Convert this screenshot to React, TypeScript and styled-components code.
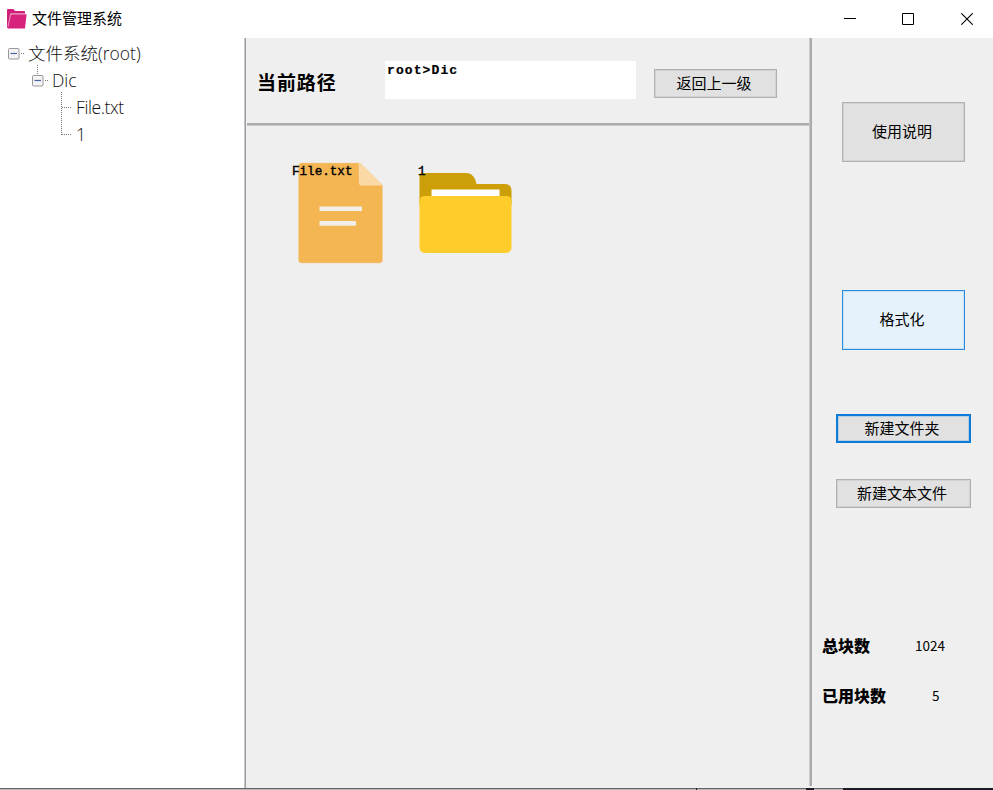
import React from "react";
import styled, { createGlobalStyle, css } from "styled-components";

const GlobalStyle = createGlobalStyle`
  * { box-sizing: border-box; }
  body { margin: 0; background: #fff; overflow: hidden; }
`;

const cjk = '"Liberation Sans", "Noto Sans CJK SC", sans-serif';

const Window = styled.div`
  display: flex;
  flex-direction: column;
  width: 993px;
  height: 790px;
  background: #fff;
  color: #000;
  font-family: ${cjk};
`;

const TitleBar = styled.header`
  display: flex;
  align-items: center;
  height: 38px;
  padding-left: 7px;
`;

const Title = styled.span`
  flex: 1;
  margin-left: 5px;
  font-size: 15px;
  line-height: 20px;
`;

const WindowControls = styled.div`
  display: flex;
  margin-right: -3px;
`;

const WindowControl = styled.span`
  display: flex;
  justify-content: center;
  width: 58.5px;
  svg { display: block; }
`;

const Body = styled.div`
  display: flex;
  height: 750px;
`;

const Tree = styled.nav`
  width: 246px;
  padding: 2px 0 0 4px;
  border-right: 1px solid #9a9fa7;
  box-shadow: inset -1px 0 #c4c6ca;
`;

const TreeRow = styled.div<{ $depth: number }>`
  display: flex;
  align-items: center;
  height: 27px;
  padding-left: ${(p) => p.$depth * 24}px;
`;

const TreeGutter = styled.svg`
  display: block;
  flex: none;
  overflow: visible;
`;

const TreeLabel = styled.span<{ $spacing?: number }>`
  font-family: "Open Sans", "Noto Sans CJK SC", sans-serif;
  font-size: 17.5px;
  font-weight: 300;
  line-height: 27px;
  color: #111;
  letter-spacing: ${(p) => p.$spacing ?? 0}px;
  white-space: nowrap;
`;

const Main = styled.main`
  display: flex;
  flex-direction: column;
  width: 563px;
  padding-left: 1px;
  background: #efefef;
`;

const PathBar = styled.div`
  display: flex;
  align-items: flex-start;
  height: 88px;
  border-bottom: 1px solid #cacaca;
  box-shadow: inset 0 -2px #ababab;
`;

const PathTitle = styled.h1`
  width: 128px;
  margin: 34px 0 0 10px;
  font-size: 19px;
  font-weight: 700;
  letter-spacing: 0.9px;
  line-height: 24px;
`;

const PathField = styled.div`
  width: 251px;
  height: 38px;
  margin-top: 23px;
  padding: 3px 2px;
  background: #fff;
  font: 700 13px/14px "Liberation Mono", monospace;
  letter-spacing: 1.1px;
  -webkit-text-stroke: 0.2px #000;
`;

type Tone = "plain" | "hover" | "focus";

const tones = {
  plain: css`
    background: #e1e1e1;
    border: 1px solid #b0b0b0;
    box-shadow: inset 0 0 0 1px #d2d2d2;
  `,
  hover: css`
    background: #e5f1fb;
    border: 1px solid #2b8cdc;
    box-shadow: inset 0 0 0 1px #c8e2f7;
  `,
  focus: css`
    background: #e1e1e1;
    border: 2px solid #0f7bd7;
    box-shadow: inset 0 0 0 1px #b3cee5;
  `,
};

const Button = styled.button<{ $w: number; $h: number; $tone?: Tone }>`
  display: flex;
  align-items: center;
  justify-content: center;
  flex: none;
  width: ${(p) => p.$w}px;
  height: ${(p) => p.$h}px;
  padding: 0 3px 0 0;
  color: #000;
  font: 15px/20px ${cjk};
  ${(p) => tones[p.$tone ?? "plain"]}
`;

const BackSlot = styled.div`
  margin: 31px 0 0 18px;
`;

const Files = styled.div`
  display: flex;
  padding: 35px 0 0 45px;
`;

const FileItem = styled.figure`
  position: relative;
  width: 126px;
  height: 104px;
  margin: 0;
  svg { display: block; }
`;

const FileName = styled.figcaption`
  position: absolute;
  top: 3px;
  left: 0;
  font: 400 12.6px/16px "Liberation Mono", monospace;
  -webkit-text-stroke: 0.4px #000;
`;

const SplitterTrack = styled.div`
  width: 3px;
  background: #efefef;
`;

const Splitter = styled.div`
  width: 3px;
  height: 748px;
  background: #ababab;
  border-left: 1px solid #cacaca;
`;

const Side = styled.aside`
  display: flex;
  flex: 1;
  flex-direction: column;
  background: #efefef;
`;

const ButtonSlot = styled.div<{ $top: number; $left: number }>`
  margin: ${(p) => p.$top}px 0 0 ${(p) => p.$left}px;
`;

const Stats = styled.dl`
  display: grid;
  grid-template-columns: 85px 66px;
  grid-auto-rows: 50px;
  align-items: center;
  margin: 113px 0 0 10px;
`;

const StatName = styled.dt`
  padding-top: 1px;
  font-size: 16px;
  font-weight: 900;
  line-height: 20px;
  white-space: nowrap;
`;

const StatValue = styled.dd<{ $pad: number }>`
  margin: 0;
  padding: 0 0 2px ${(p) => p.$pad}px;
  font: 13.5px/20px "Noto Sans CJK SC", sans-serif;
`;

const BottomEdge = styled.footer`
  display: flex;
  height: 2px;
  border-top: 1px solid #666;
  background: #b9b7b7;
`;

const EdgeMark = styled.span<{ $start: number; $w: number }>`
  width: ${(p) => p.$w}px;
  height: 2px;
  margin: -1px 0 0 ${(p) => p.$start}px;
  background: #1c1b29;
`;

function Gutter({ expander = false, up = 0, last = false }: { expander?: boolean; up?: number; last?: boolean }) {
  return (
    <TreeGutter width="24" height="27" fill="none">
      {up > 0 && <path d={`M9.5 ${-up}V${expander ? 8 : last ? 14 : 27}`} stroke="#777" strokeDasharray="1 1" />}
      <path d={`M${expander ? 17 : 10} 13.5H${expander ? 21 : 20}`} stroke="#777" strokeDasharray="1 1" />
      {expander && (
        <>
          <rect x="4.5" y="8.5" width="10.5" height="10.5" rx="1" fill="#f3f3f3" stroke="#999" />
          <path d="M6.500 13.5h6.500" stroke="#4b63a7" strokeWidth="1.2" />
        </>
      )}
    </TreeGutter>
  );
}

function AppIcon() {
  return (
    <svg width="20" height="20" viewBox="0 0 20 20">
      <path d="M0 18.500V.7Q0 0 1.2 0H6.2L8.2 2H17.2Q18 2 18 3V5H4.2L1.5 19.500Z" fill="#d0207a" />
      <path d="M4.600 5.200H19.600L18 19.500H.8L3.600 6.200Z" fill="#d8237d" />
      <path d="M1 17.500L3.700 4.700H18.500" fill="none" stroke="#f3b4d3" strokeWidth=".8" />
    </svg>
  );
}

function TextFileIcon() {
  return (
    <svg width="92" height="104" viewBox="0 0 92 104">
      <path d="M9.500 2H68L90.500 24V99Q90.500 102 87.500 102H9.500Q6.500 102 6.500 99V5Q6.500 2 9.500 2Z" fill="#f4b553" stroke="#f3cf98" strokeWidth=".5" />
      <path d="M66.500 1.500H68L91 24.500H69.500Q67 24.500 67 22Z" fill="#fad9a6" />
      <path d="M68.500 1H91V24Z" fill="#efefef" />
      <path d="M27.500 47.700H70M27.500 62.400H64" stroke="#f1eee9" strokeWidth="4.600" />
    </svg>
  );
}

function FolderIcon() {
  return (
    <svg width="96" height="104" viewBox="0 0 96 104">
      <path d="M1.500 42V14Q1.500 12 4 12H48C54 12 57 16 58.500 23H87Q93.500 23 93.500 30V44H1.500Z" fill="#cc9e07" />
      <path d="M13.500 28.500H81.500V38H13.500Z" fill="#fff" />
      <path d="M7 35H88Q93.500 35 93.500 40V86Q93.500 92 87 92H8Q1.500 92 1.500 86V40Q1.500 35 7 35Z" fill="#ffcd2b" />
    </svg>
  );
}

export default function App() {
  return (
    <Window>
      <GlobalStyle />
      <TitleBar>
        <AppIcon />
        <Title>文件管理系统</Title>
        <WindowControls>
          <WindowControl><svg width="12" height="12"><path d="M0 5.500H12" stroke="#000" /></svg></WindowControl>
          <WindowControl><svg width="12" height="12"><path d="M.5.5h11v11H.5z" fill="none" stroke="#000" /></svg></WindowControl>
          <WindowControl><svg width="12" height="12"><path d="M.3.300l11.400 11.400M11.700.300L.3 11.700" stroke="#000" strokeWidth="1.100" /></svg></WindowControl>
        </WindowControls>
      </TitleBar>
      <Body>
        <Tree>
          <TreeRow $depth={0}><Gutter expander /><TreeLabel>文件系统(root)</TreeLabel></TreeRow>
          <TreeRow $depth={1}><Gutter expander up={2} /><TreeLabel>Dic</TreeLabel></TreeRow>
          <TreeRow $depth={2}><Gutter up={2} /><TreeLabel $spacing={-0.4}>File.txt</TreeLabel></TreeRow>
          <TreeRow $depth={2}><Gutter up={1} last /><TreeLabel $spacing={-0.4}>1</TreeLabel></TreeRow>
        </Tree>
        <Main>
          <PathBar>
            <PathTitle>当前路径</PathTitle>
            <PathField>root&gt;Dic</PathField>
            <BackSlot><Button $w={123} $h={29}>返回上一级</Button></BackSlot>
          </PathBar>
          <Files>
            <FileItem><TextFileIcon /><FileName>File.txt</FileName></FileItem>
            <FileItem><FolderIcon /><FileName>1</FileName></FileItem>
          </Files>
        </Main>
        <SplitterTrack><Splitter /></SplitterTrack>
        <Side>
          <ButtonSlot $top={64} $left={30}><Button $w={123} $h={60}>使用说明</Button></ButtonSlot>
          <ButtonSlot $top={128} $left={30}><Button $w={123} $h={60} $tone="hover">格式化</Button></ButtonSlot>
          <ButtonSlot $top={64} $left={24}><Button $w={135} $h={29} $tone="focus">新建文件夹</Button></ButtonSlot>
          <ButtonSlot $top={36} $left={24}><Button $w={135} $h={29}>新建文本文件</Button></ButtonSlot>
          <Stats>
            <StatName>总块数</StatName><StatValue $pad={8}>1024</StatValue>
            <StatName>已用块数</StatName><StatValue $pad={25}>5</StatValue>
          </Stats>
        </Side>
      </Body>
      <BottomEdge>
        <EdgeMark $start={696} $w={1} />
        <EdgeMark $start={109} $w={8} />
        <EdgeMark $start={29} $w={150} />
      </BottomEdge>
    </Window>
  );
}
